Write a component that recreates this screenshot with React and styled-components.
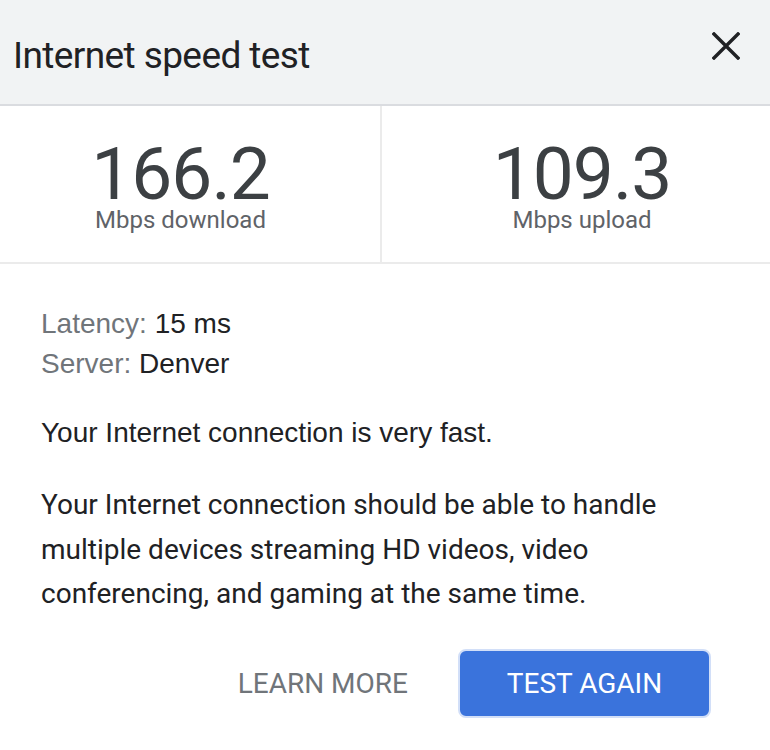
import React from "react";
import styled, {createGlobalStyle} from "styled-components";

const GlobalStyle = createGlobalStyle`
  body {
    margin: 0;
    background: #fff;
    font-family: Roboto, "Liberation Sans", sans-serif;
  }
`;

const Dialog = styled.div`
  width: 770px;
  height: 750px;
  background: #fff;
  overflow: hidden;
`;

const Header = styled.div`
  height: 106px;
  display: flex;
  align-items: center;
  justify-content: space-between;
  padding: 0 30px 0 13px;
  background-color: #f1f3f4;
  border-bottom: 2px solid #dadce0;
  box-sizing: border-box;
`;

const Title = styled.h1`
  margin: 6px 0 0 0;
  font-family: Roboto, sans-serif;
  font-weight: 400;
  font-size: 37px;
  letter-spacing: -0.6px;
  color: #202124;
`;

const CloseButton = styled.button`
  display: flex;
  padding: 0;
  margin-top: -12px;
  border: none;
  background: none;
  cursor: pointer;
`;

const Stats = styled.div`
  display: flex;
  height: 158px;
  border-bottom: 2px solid #ebebeb;
  box-sizing: border-box;
`;

const Stat = styled.div`
  width: ${(p) => p.$width}px;
  flex-shrink: 0;
  box-sizing: border-box;
  display: flex;
  flex-direction: column;
  align-items: center;
  padding-top: 39px;
  padding-left: ${(p) => p.$padLeft || 0}px;
  padding-right: ${(p) => p.$padRight || 0}px;
  border-left: ${(p) => (p.$divider ? "2px solid #ebebeb" : "none")};
`;

const Value = styled.div`
  font-family: Roboto, sans-serif;
  font-size: 73px;
  line-height: 58px;
  letter-spacing: -1px;
  color: #3c4043;
`;

const Unit = styled.div`
  font-family: Roboto, sans-serif;
  font-size: 24px;
  line-height: 26px;
  color: #5f6368;
  margin-top: 4px;
`;

const Body = styled.div`
  padding: 40px 41px 0 41px;
`;

const Info = styled.div`
  font-family: "Liberation Sans", Arial, sans-serif;
  font-size: 28px;
  line-height: 40px;
  color: #202124;
`;

const InfoLabel = styled.span`
  color: #70757a;
`;

const Verdict = styled.p`
  margin: 29px 0 0 0;
  font-family: "Liberation Sans", Arial, sans-serif;
  font-size: 28px;
  line-height: 40px;
  color: #202124;
`;

const Description = styled.p`
  margin: 30px 0 0 0;
  font-family: Roboto, sans-serif;
  font-size: 28px;
  line-height: 44.5px;
  color: #202124;
`;

const Actions = styled.div`
  display: flex;
  justify-content: flex-end;
  align-items: center;
  gap: 50px;
  margin-top: 32px;
  padding-right: 18px;
`;

const TextButton = styled.button`
  border: none;
  background: none;
  padding: 0;
  font-family: Roboto, sans-serif;
  font-size: 28px;
  color: #70757a;
  cursor: pointer;
`;

const PrimaryButton = styled.button`
  width: 253px;
  height: 69px;
  border: 2px solid #d2dff8;
  border-radius: 8px;
  background-color: #3a73dc;
  font-family: Roboto, sans-serif;
  font-size: 28px;
  color: #fff;
  cursor: pointer;
`;

const CloseIcon = () => (
  <svg width="28" height="28" viewBox="0 0 28 28">
    <path d="M2 2 L26 26 M26 2 L2 26" stroke="#202124" strokeWidth="3.4" strokeLinecap="square" fill="none" />
  </svg>
);

export default function App() {
  return (
    <Dialog>
      <GlobalStyle />
      <Header>
        <Title>Internet speed test</Title>
        <CloseButton aria-label="Close">
          <CloseIcon />
        </CloseButton>
      </Header>
      <Stats>
        <Stat $width={380} $padRight={19}>
          <Value>166.2</Value>
          <Unit>Mbps download</Unit>
        </Stat>
        <Stat $width={390} $divider $padLeft={12}>
          <Value>109.3</Value>
          <Unit>Mbps upload</Unit>
        </Stat>
      </Stats>
      <Body>
        <Info>
          <div>
            <InfoLabel>Latency: </InfoLabel>15 ms
          </div>
          <div>
            <InfoLabel>Server: </InfoLabel>Denver
          </div>
        </Info>
        <Verdict>Your Internet connection is very fast.</Verdict>
        <Description>
          Your Internet connection should be able to handle multiple devices streaming HD videos, video
          conferencing, and gaming at the same time.
        </Description>
        <Actions>
          <TextButton>LEARN MORE</TextButton>
          <PrimaryButton>TEST AGAIN</PrimaryButton>
        </Actions>
      </Body>
    </Dialog>
  );
}
